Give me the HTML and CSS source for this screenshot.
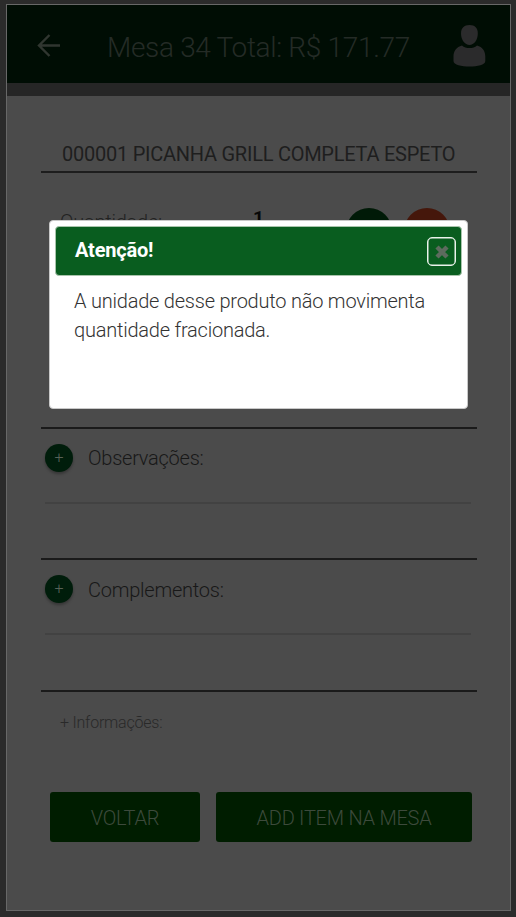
FILE: index.html
```html
<!DOCTYPE html>
<html lang="pt-BR">
<head>
<meta charset="utf-8">
<title>Mesa 34</title>
<link rel="stylesheet" href="styles.css">
</head>
<body>
<div class="app">
  <header class="topbar">
    <svg class="back" width="24" height="24" viewBox="0 0 24 24" fill="none" stroke="#303630" stroke-width="2.400"><path d="M23 11.500H2.500M12.500 1L2 11.500L12.500 22"/></svg>
    <h1 class="topbar-title">Mesa 34 Total: R$ 171.77</h1>
    <svg class="user" width="34" height="44" viewBox="0 0 34 44" fill="#2b2b2c"><path d="M17.500 1c5.500 0 8.300 3 8.300 8.500C25.800 16 22 21 17.500 21S9 16 9 9.500C9 4 12 1 17.500 1z"/><path d="M10 21.500c2 1.800 4.500 2.600 7.500 2.600s5.500-.8 7.500-2.600c5.500 1.500 8.300 5.500 8.300 11v4.500c0 4-7.800 5.500-15.800 5.500S1.500 41 1.500 37v-4.500c0-5.500 3-9.500 8.500-11z"/></svg>
  </header>
  <div class="band"></div>
  <main class="content">
    <h2 class="product">000001 PICANHA GRILL COMPLETA ESPETO</h2>
    <section class="quantity">
      <span class="quantity-label">Quantidade:</span>
      <span class="quantity-value">1</span>
      <span class="step step-more"></span>
      <span class="step step-less"></span>
    </section>
    <section class="group">
      <div class="group-head"><span class="add">+</span><span>Observações:</span></div>
    </section>
    <section class="group">
      <div class="group-head"><span class="add">+</span><span>Complementos:</span></div>
    </section>
    <section class="info">+ Informações:</section>
    <div class="actions">
      <button class="btn btn-back">VOLTAR</button>
      <button class="btn btn-add">ADD ITEM NA MESA</button>
    </div>
  </main>
</div>
<div class="dialog">
  <div class="dialog-head">
    <strong>Atenção!</strong>
    <span class="close"><svg width="14" height="14" viewBox="0 0 14 14" stroke="#5d6b5e" stroke-width="4.500"><path d="M2 2l10 10M12 2L2 12"/></svg></span>
  </div>
  <p class="dialog-text">A unidade desse produto não movimenta<br>quantidade fracionada.</p>
</div>
</body>
</html>
```
FILE: styles.css
```css
* { box-sizing: border-box; }
body {
  margin: 0;
  height: 917px;
  padding: 4px 5px 6px 6px;
  background: #2b2b2b;
  font-family: Roboto, sans-serif;
  font-weight: 300;
  overflow: hidden;
}
.app {
  height: 907px;
  border: 1px solid #686868;
  background: #4b4b4b;
  display: flex;
  flex-direction: column;
}
.topbar {
  height: 78px;
  background: #000d04;
  display: flex;
  align-items: center;
  padding: 4px 24px 0 30px;
}
.topbar-title {
  flex: 1;
  margin: 0 0 0 46px;
  padding-top: 3px;
  font-size: 28px;
  font-weight: 300;
  line-height: 32px;
  letter-spacing: -.32px;
  color: #242b26;
  white-space: nowrap;
}
.band { height: 13px; background: #262626; }
.content { width: 436px; margin-left: 34px; }
.product {
  margin: 0;
  height: 77px;
  padding: 46px 0 0 21px;
  border-bottom: 2px solid #1d1d1d;
  font-size: 20px;
  line-height: 24px;
  font-weight: 400;
  letter-spacing: -.25px;
  color: #1e1e1e;
  white-space: nowrap;
}
.quantity {
  height: 256px;
  border-bottom: 2px solid #1a1a1a;
  display: flex;
  align-items: flex-start;
  padding: 35px 0 0 19px;
  font-size: 20px;
  line-height: 24px;
  letter-spacing: -.25px;
  color: #222;
}
.quantity-label { width: 193px; padding-top: 2px; }
.quantity-value { width: 93px; font-weight: 700; font-size: 19px; color: #080808; line-height: 20px; }
.step { width: 46px; height: 46px; border-radius: 50%; flex: none; }
.step-more { background: #001a07; }
.step-less { background: #45170b; margin-left: 12px; }
.group {
  height: 131px;
  border-bottom: 2px solid #1a1a1a;
}
.group + .group { height: 132px; }
.group-head {
  height: 75px;
  margin: 0 6px 0 4px;
  padding: 15px 0 0;
  border-bottom: 2px solid #424242;
  display: flex;
  align-items: flex-start;
  gap: 15px;
  font-size: 20px;
  line-height: 28px;
  letter-spacing: -.24px;
  color: #181818;
}
.group + .group .group-head { line-height: 30px; }
.add {
  width: 28px;
  height: 28px;
  border-radius: 50%;
  background: #001d0b;
  box-shadow: 0 2px 3px rgba(0, 0, 0, .3);
  color: #586258;
  font-size: 16px;
  line-height: 27px;
  text-align: center;
}
.info {
  height: 100px;
  padding: 21px 0 0 19px;
  font-size: 16px;
  line-height: 20px;
  letter-spacing: -.22px;
  color: #292929;
}
.actions { display: flex; gap: 16px; padding-left: 9px; }
.btn {
  height: 50px;
  padding: 2px 0 0;
  border: 0;
  border-radius: 3px;
  background: #001d00;
  color: #3d4a3c;
  font: 300 20px/48px Roboto, sans-serif;
  letter-spacing: -.25px;
}
.btn-back { width: 150px; }
.btn-add { width: 256px; flex: none; }
.dialog {
  position: absolute;
  left: 49px;
  top: 220px;
  width: 419px;
  height: 189px;
  padding: 5px;
  border: 1px solid #c8c8c8;
  border-radius: 4px;
  background: #fff;
}
.dialog-head {
  height: 50px;
  padding: 0 5px 0 19px;
  border: 1px solid #a9c4ac;
  border-radius: 4px;
  background: #095d1f;
  color: #fff;
  display: flex;
  align-items: center;
  justify-content: space-between;
  font-size: 20px;
}
.dialog-head strong { font-weight: 700; letter-spacing: -.2px; padding-bottom: 2px; }
.close {
  width: 29px;
  height: 29px;
  padding: 1px 0 0 1px;
  border: 1px solid #e9f2ea;
  box-shadow: inset 0 0 0 .5px #e9f2ea;
  border-radius: 5px;
  display: flex;
  align-items: center;
  justify-content: center;
}
.dialog-text {
  margin: 11px 0 0 19px;
  font-size: 20px;
  line-height: 29px;
  letter-spacing: -.22px;
  color: #333;
  white-space: nowrap;
}
```
